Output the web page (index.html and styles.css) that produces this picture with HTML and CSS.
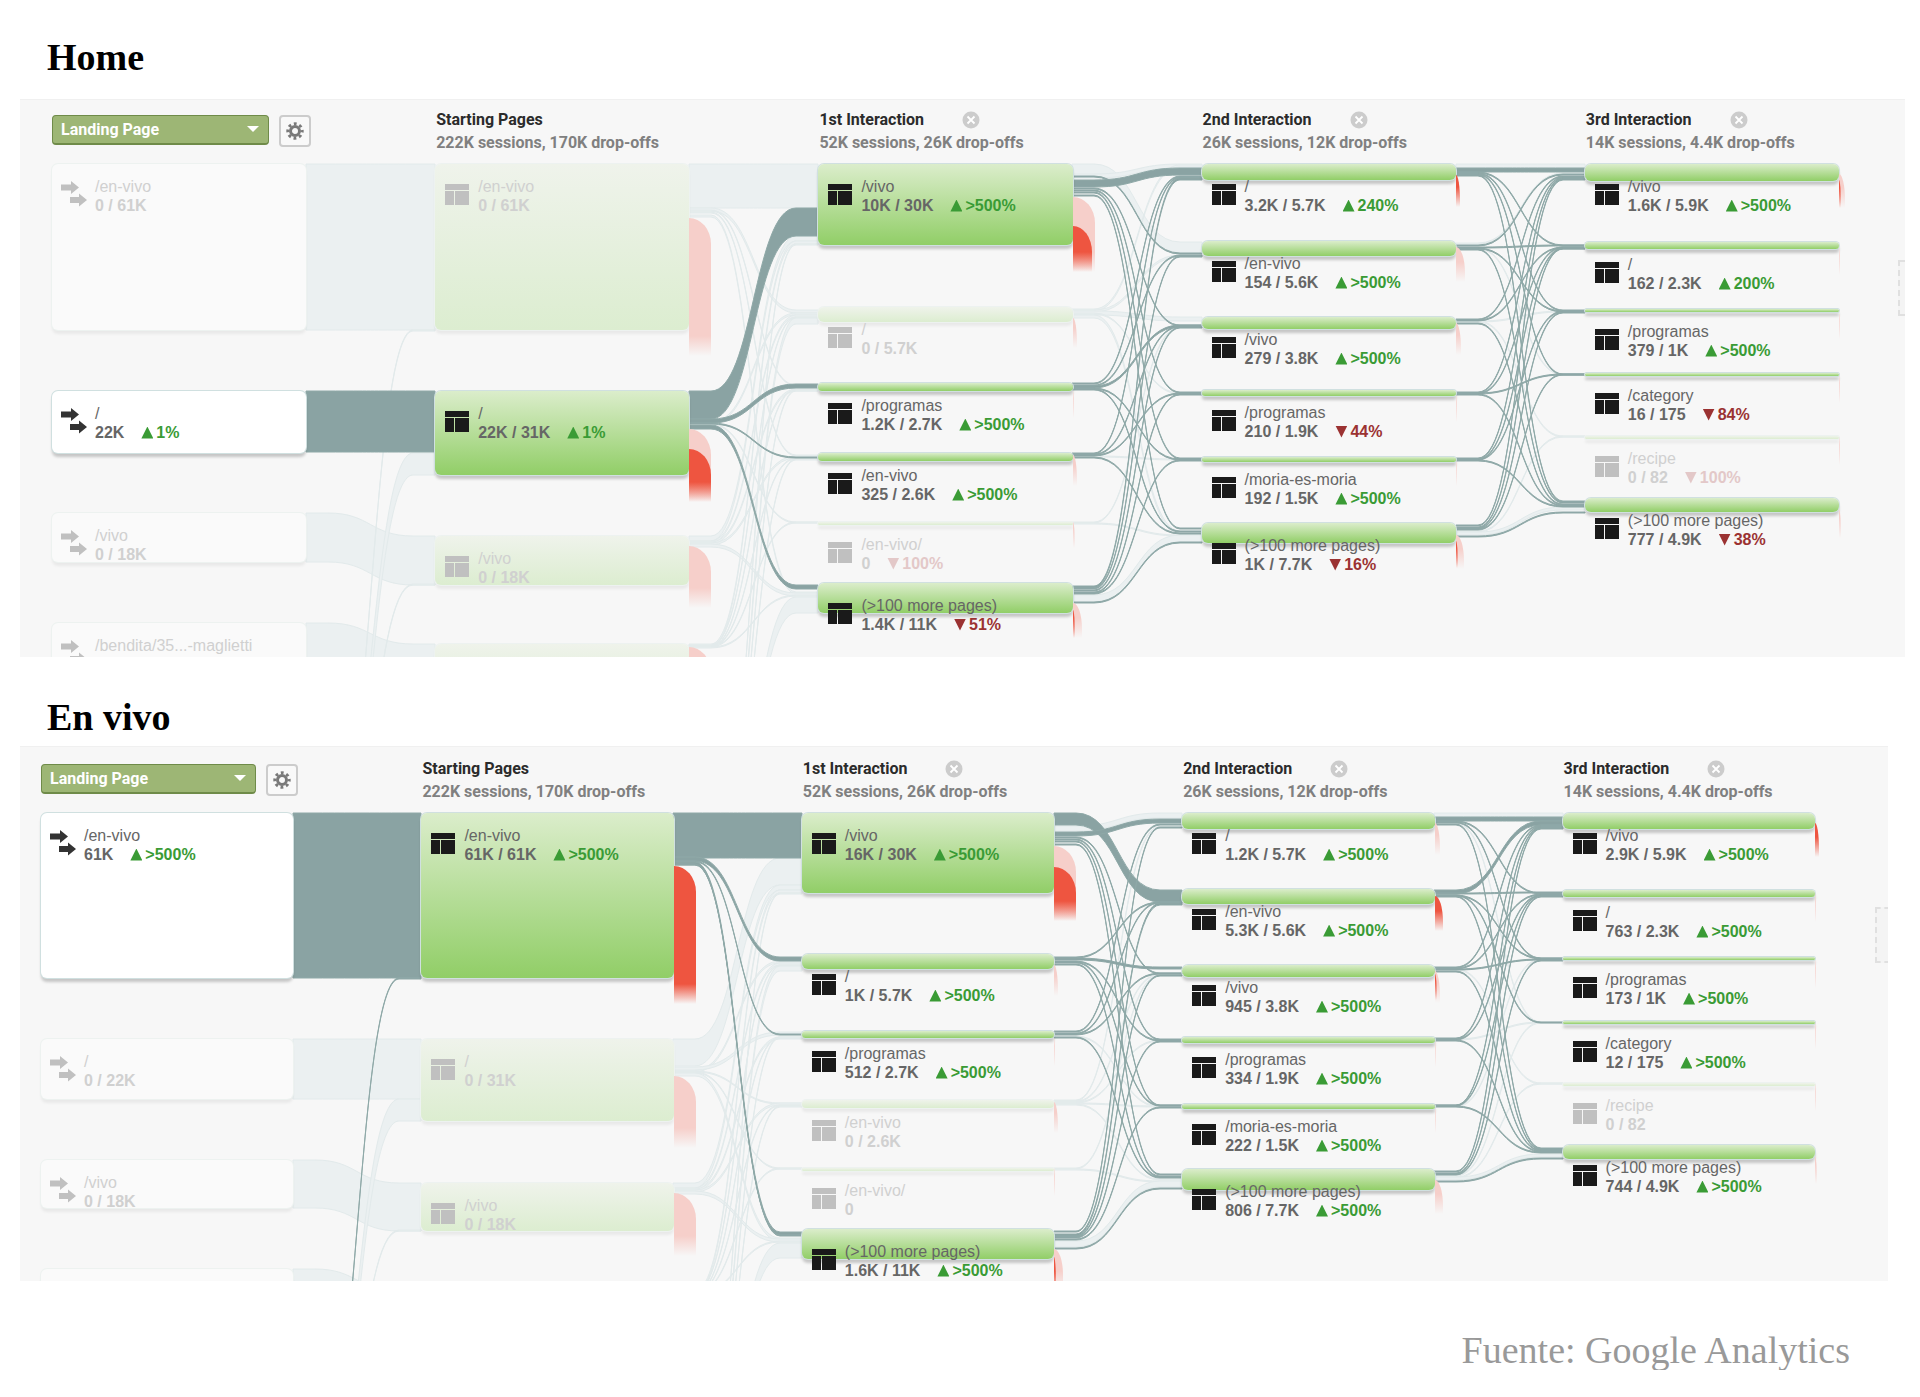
FILE: index.html
```html
<!DOCTYPE html>
<html lang="es">
<head>
  <meta charset="UTF-8">
  <meta name="viewport" content="width=device-width, initial-scale=1">
  <title>Flujo de usuarios - Home y En vivo</title>
  <link rel="stylesheet" href="styles.css">
</head>
<body>

<!-- icons -->
<svg class="sprite" aria-hidden="true">
  <symbol id="icon-page" viewBox="0 0 24 21">
    <path d="M0 0h24v6H0zM0 7h9v14H0zM10 7h14v14H10z"/>
  </symbol>
  <symbol id="icon-landing" viewBox="0 0 26 26">
    <path d="M0 3.500h10V0l8 6.500-8 6.500V9.500H0zM9 16h9v-3.500l8 6.500-8 6.500V22H9z"/>
  </symbol>
  <symbol id="icon-close" viewBox="0 0 18 18">
    <circle cx="9" cy="9" r="8.500" fill="#cccccc"/>
    <path d="M5.500 5.500l7 7M12.500 5.500l-7 7" stroke="#fff" stroke-width="1.800"/>
  </symbol>
  <symbol id="icon-gear" viewBox="0 0 18 18">
    <circle cx="9" cy="9" r="4.500" fill="none" stroke="#7a7a7a" stroke-width="3"/>
    <circle cx="9" cy="9" r="7.200" fill="none" stroke="#7a7a7a" stroke-width="3" stroke-dasharray="2.800 2.855" stroke-dashoffset="1.400"/>
  </symbol>
</svg>

<section>
  <h2 class="title title-home">Home</h2>
  <div class="panel panel-home">
    <div class="columns heads">
      <div class="tools">
        <div class="dropdown">
          <select aria-label="Dimension"><option>Landing Page</option></select>
        </div>
        <button class="gear" aria-label="Settings"><svg><use href="#icon-gear"/></svg></button>
      </div>
      <div class="head">
        <div class="step">Starting Pages</div>
        <div class="sessions">222K sessions, 170K drop-offs</div>
      </div>
      <div class="head">
        <div class="step">1st Interaction <button class="close" aria-label="Remove step"><svg><use href="#icon-close"/></svg></button></div>
        <div class="sessions">52K sessions, 26K drop-offs</div>
      </div>
      <div class="head">
        <div class="step">2nd Interaction <button class="close" aria-label="Remove step"><svg><use href="#icon-close"/></svg></button></div>
        <div class="sessions">26K sessions, 12K drop-offs</div>
      </div>
      <div class="head">
        <div class="step">3rd Interaction <button class="close" aria-label="Remove step"><svg><use href="#icon-close"/></svg></button></div>
        <div class="sessions">14K sessions, 4.4K drop-offs</div>
      </div>
    </div>
    <div class="columns stage" id="flow-home"></div>
    <div class="next-step"></div>
  </div>
</section>

<section>
  <h2 class="title title-vivo">En vivo</h2>
  <div class="panel panel-vivo">
    <div class="columns heads">
      <div class="tools">
        <div class="dropdown">
          <select aria-label="Dimension"><option>Landing Page</option></select>
        </div>
        <button class="gear" aria-label="Settings"><svg><use href="#icon-gear"/></svg></button>
      </div>
      <div class="head">
        <div class="step">Starting Pages</div>
        <div class="sessions">222K sessions, 170K drop-offs</div>
      </div>
      <div class="head">
        <div class="step">1st Interaction <button class="close" aria-label="Remove step"><svg><use href="#icon-close"/></svg></button></div>
        <div class="sessions">52K sessions, 26K drop-offs</div>
      </div>
      <div class="head">
        <div class="step">2nd Interaction <button class="close" aria-label="Remove step"><svg><use href="#icon-close"/></svg></button></div>
        <div class="sessions">26K sessions, 12K drop-offs</div>
      </div>
      <div class="head">
        <div class="step">3rd Interaction <button class="close" aria-label="Remove step"><svg><use href="#icon-close"/></svg></button></div>
        <div class="sessions">14K sessions, 4.4K drop-offs</div>
      </div>
    </div>
    <div class="columns stage" id="flow-vivo"></div>
    <div class="next-step"></div>
  </div>
</section>

<footer class="source">Fuente: Google Analytics</footer>

<script src="flow.js"></script>
</body>
</html>
```

FILE: styles.css
```css
* {
  box-sizing: border-box;
}

body {
  margin: 0;
  background: #fff;
  font-family: "Liberation Sans", Arial, sans-serif;
  font-size: 16px;
}

button {
  padding: 0;
  border: none;
  background: none;
  cursor: pointer;
}

.sprite {
  display: none;
}

.title {
  margin: 0;
  padding-left: 47px;
  font-family: "Liberation Serif", serif;
  font-size: 38px;
  line-height: 40px;
  font-weight: bold;
  color: #000;
}

.title-home {
  padding-top: 37px;
  padding-bottom: 22px;
}

.title-vivo {
  padding-top: 40px;
  padding-bottom: 9px;
}

.panel {
  position: relative;
  background: #f7f7f7;
  border-top: 1px solid #f0f0f0;
  overflow: hidden;
}

.panel-home {
  margin: 0 15px 0 20px;
}

.panel-vivo {
  margin: 0 32px 0 20px;
}

/* five equal columns, shared by the heads and the flow below */
.columns {
  display: grid;
  grid-template-columns: repeat(5, minmax(0, 1fr));
}

.panel-home .columns {
  padding-left: 32px;
  padding-right: 66px;
  column-gap: 129px;
}

.panel-vivo .columns {
  padding-left: 21px;
  padding-right: 73px;
  column-gap: 128px;
}

.panel-home .heads {
  height: 62px;
  padding-top: 8px;
}

.panel-vivo .heads {
  height: 63px;
  padding-top: 10px;
}

.head {
  padding-left: 1px;
  font-family: Roboto, sans-serif;
  font-weight: bold;
  line-height: 23px;
  white-space: nowrap;
}

.step {
  display: flex;
  align-items: center;
  gap: 38px;
  color: #2b2b2b;
}

.sessions {
  color: #808080;
}

.close,
.close svg {
  display: block;
  width: 18px;
  height: 18px;
}

.tools {
  display: flex;
  gap: 10px;
  padding-top: 7px;
}

.dropdown {
  position: relative;
  flex: none;
  width: 217px;
  height: 30px;
}

.panel-vivo .dropdown {
  width: 215px;
}

.dropdown select {
  appearance: none;
  width: 100%;
  height: 100%;
  padding: 0 8px;
  border: 1px solid #6f8b49;
  border-bottom-width: 2px;
  border-radius: 4px;
  background: #9db675;
  color: #fff;
  font-family: Roboto, sans-serif;
  font-size: 16px;
  font-weight: bold;
}

.dropdown::after {
  content: "";
  position: absolute;
  top: 11px;
  right: 10px;
  border: 6px solid transparent;
  border-top-color: #fff;
  border-bottom: none;
}

.gear {
  display: flex;
  flex: none;
  align-items: center;
  justify-content: center;
  width: 32px;
  height: 32px;
  border: 2px solid #ccc;
  border-radius: 4px;
  background: #f9f9f9;
}

.gear svg {
  width: 18px;
  height: 18px;
}

/* flow diagram */
.stage {
  position: relative;
  overflow: hidden;
}

#flow-home {
  height: 495px;
}

#flow-vivo {
  height: 471px;
}

.links {
  position: absolute;
  top: 0;
  left: 0;
  width: 100%;
  height: 100%;
}

.link {
  fill: #ebf0f1;
  stroke: #e2eaeb;
}

.link.on {
  fill: #8aa3a3;
  stroke: #8fa9a8;
}

.column {
  position: relative;
}

.node {
  position: absolute;
  left: 0;
  right: 0;
}

.bar {
  position: absolute;
  top: 0;
  left: 0;
  right: 0;
  border-radius: 6px;
  background: linear-gradient(#eff3eb, #dcedd0);
  box-shadow: 0 0 0 1px #edf2f0, 0 4px 3px rgba(0, 0, 0, 0.06);
}

.node.on .bar {
  background: linear-gradient(#dbedcb, #91ce67);
  box-shadow: 0 0 0 1px #d0e0e0, 0 4px 3px rgba(0, 0, 0, 0.2);
}

.node.landing .bar {
  background: #fafafa;
}

.node.landing.on .bar {
  background: #fff;
}

.caption {
  position: relative;
  display: flex;
  gap: 8px;
  padding: 13px 0 0 9px;
  line-height: 19px;
  color: #d0d0d0;
  white-space: nowrap;
}

.icon {
  width: 26px;
  height: 21px;
  margin-top: 7px;
  fill: #c0c0c0;
}

.landing .icon {
  height: 26px;
  margin-top: 4px;
}

.on .caption {
  color: #666;
}

.on .icon {
  fill: #1a1a1a;
}

.on.landing .icon {
  fill: #333;
}

.numbers {
  display: flex;
  align-items: center;
  font-weight: bold;
}

.change {
  display: flex;
  align-items: center;
  gap: 3px;
  margin-left: 17px;
}

.change::before {
  content: "";
  width: 12px;
  height: 12px;
  background: currentColor;
}

.up {
  color: #3a9b35;
}

.up::before {
  clip-path: polygon(50% 0, 100% 100%, 0 100%);
}

.down {
  color: #e3c8c8;
}

.on .down {
  color: #9b3232;
}

.down::before {
  clip-path: polygon(0 0, 100% 0, 50% 100%);
}

/* drop-offs */
.drop {
  position: absolute;
  left: 100%;
  border-radius: 0 100% 0 0 / 0 26px 0 0;
  background: linear-gradient(#f6cfca calc(100% - 20px), transparent);
}

.drop.red {
  background: linear-gradient(#ee5540 calc(100% - 20px), transparent);
}

.next-step {
  position: absolute;
  top: 160px;
  right: -2px;
  height: 56px;
  border: 2px dashed #e0e0e0;
  background: #f4f4f4;
}

.panel-home .next-step {
  width: 9px;
}

.panel-vivo .next-step {
  width: 15px;
}

.source {
  padding: 49px 70px 0 0;
  font-family: "Liberation Serif", serif;
  font-size: 38px;
  line-height: 40px;
  text-align: right;
  color: #999;
}
```

FILE: flow.js
```javascript
// node: [top, height, label, numbers, change, active, drop-offs]
// drop-off: [offset, height, width, active]
const home = {
  columns: [
    [
      [2, 166, '/en-vivo', '0 / 61K', '', 0, []],
      [229, 62, '/', '22K', '+1%', 1, []],
      [351, 49, '/vivo', '0 / 18K', '', 0, []],
      [461, 60, '/bendita/35...-maglietti', '', '', 0, []],
      [700, 60, '', '', '', 0, []]
    ],
    [
      [2, 166, '/en-vivo', '0 / 61K', '', 0, [[54, 138, 22, 0]]],
      [229, 84, '/', '22K / 31K', '+1%', 1, [[38, 73, 22, 0], [58, 53, 22, 1]]],
      [374, 49, '/vivo', '0 / 18K', '', 0, [[10, 62, 22, 0]]],
      [482, 60, '', '', '', 0, [[3, 62, 22, 0]]],
      [700, 60, '', '', '', 0, []]
    ],
    [
      [2, 81, '/vivo', '10K / 30K', '+>500%', 1, [[33, 75, 22, 0], [62, 46, 19, 1]]],
      [145, 15, '/', '0 / 5.7K', '', 0, [[11, 30, 4, 0]]],
      [221, 8, '/programas', '1.2K / 2.7K', '+>500%', 1, [[8, 27, 1, 0]]],
      [291, 8, '/en-vivo', '325 / 2.6K', '+>500%', 1, [[2, 31, 4, 0]]],
      [360, 3, '/en-vivo/', '0', '-100%', 0, [[0, 26, 2, 0]]],
      [421, 30, '(>100 more pages)', '1.4K / 11K', '-51%', 1, [[20, 35, 9, 0], [27, 28, 2, 1]]]
    ],
    [
      [2, 16, '/', '3.2K / 5.7K', '+240%', 1, [[11, 32, 4, 1]]],
      [79, 15, '/en-vivo', '154 / 5.6K', '+>500%', 1, [[6, 35, 9, 0]]],
      [155, 12, '/vivo', '279 / 3.8K', '+>500%', 1, [[6, 32, 5, 0]]],
      [228, 6, '/programas', '210 / 1.9K', '-44%', 1, [[5, 27, 1, 0]]],
      [295, 5, '/moria-es-moria', '192 / 1.5K', '+>500%', 1, [[4, 25, 1, 0]]],
      [361, 20, '(>100 more pages)', '1K / 7.7K', '-16%', 1, [[12, 34, 8, 0], [18, 27, 2, 1]]]
    ],
    [
      [2, 17, '/vivo', '1.6K / 5.9K', '+>500%', 1, [[10, 34, 6, 0], [16, 28, 2, 1]]],
      [80, 7, '/', '162 / 2.3K', '+200%', 1, [[6, 27, 1, 0]]],
      [147, 3, '/programas', '379 / 1K', '+>500%', 1, [[4, 26, 1, 0]]],
      [211, 3, '/category', '16 / 175', '-84%', 1, [[2, 28, 1, 0]]],
      [274, 3, '/recipe', '0 / 82', '-100%', 0, [[1, 28, 1, 0]]],
      [336, 14, '(>100 more pages)', '777 / 4.9K', '-38%', 1, [[11, 29, 2, 0]]]
    ]
  ],
  // link: [from row, to row, from offset, to offset, thickness, active]
  links: [
    [
      [0, 0, 0, 0, 166, 0], [1, 1, 0, 0, 61, 1], [2, 2, 0, 0, 49, 0], [3, 3, 0, 0, 60, 0],
      [4, 0, 0, 166, 1, 0], [4, 1, 8, 62, 22, 0], [4, 2, 60, 48, 1, 0]
    ],
    [
      [0, 0, 0, 0, 44, 0], [0, 1, 44, 3, 3, 0], [0, 2, 46, 2, 1, 0], [0, 3, 48, 2, 1, 0], [0, 5, 51, 9, 2, 0],
      [1, 0, 0, 44, 28, 1], [1, 2, 28, 1, 4, 1], [1, 3, 32, 4, 1, 1], [1, 5, 34, 2, 4, 1],
      [1, 1, 31, 6, 2, 0], [1, 4, 33, 0, 1, 0],
      [2, 0, 0, 72, 5, 0], [2, 1, 5, 8, 2, 0], [2, 2, 6, 6, 2, 0], [2, 3, 7, 3, 2, 0], [2, 5, 8, 10, 3, 0],
      [3, 0, 0, 77, 3, 0], [3, 1, 1, 10, 1, 0], [3, 2, 2, 6, 1, 0], [3, 3, 2, 5, 1, 0], [3, 4, 2, 0, 1, 0], [3, 5, 3, 12, 1, 0],
      [4, 0, 0, 80, 1, 0], [4, 1, 2, 11, 6, 0], [4, 2, 8, 7, 1, 0], [4, 3, 9, 6, 1, 0], [4, 5, 10, 14, 16, 0]
    ],
    [
      [0, 1, 0, 1, 11, 0], [0, 0, 10, 0, 4, 0], [0, 1, 12, 12, 1, 1], [0, 0, 16, 4, 7, 1],
      [0, 2, 24, 8, 1, 1], [0, 3, 26, 2, 1, 1], [0, 4, 28, 1, 1, 1], [0, 5, 31, 5, 1, 1],
      [1, 0, 2, 1, 2, 0], [1, 1, 3, 14, 2, 0], [1, 2, 4, 0, 4, 0], [1, 3, 6, 3, 1, 0], [1, 5, 8, 8, 3, 0],
      [2, 0, 0, 12, 1, 1], [2, 1, 2, 14, 1, 1], [2, 2, 3, 8, 2, 1], [2, 4, 5, 2, 1, 1], [2, 5, 6, 8, 1, 1],
      [3, 0, 0, 13, 1, 1], [3, 2, 1, 9, 1, 1], [3, 3, 2, 3, 1, 1], [3, 4, 3, 2, 1, 0], [3, 5, 4, 10, 1, 1],
      [4, 2, 0, 10, 1, 0], [4, 5, 1, 12, 1, 0],
      [5, 0, 3, 14, 2, 1], [5, 1, 5, 15, 1, 1], [5, 2, 7, 10, 1, 1], [5, 3, 9, 4, 1, 1], [5, 4, 10, 3, 1, 1],
      [5, 5, 12, 12, 7, 0], [5, 5, 19, 19, 1, 1]
    ],
    [
      [0, 0, 0, 0, 4, 0], [0, 0, 4, 4, 4, 1], [0, 1, 8, 3, 1, 1], [0, 2, 9, 1, 1, 1], [0, 3, 10, 1, 1, 1], [0, 5, 11, 3, 1, 1],
      [1, 0, 2, 9, 1, 0], [1, 0, 4, 10, 1, 1], [1, 1, 6, 3, 1, 1], [1, 2, 7, 2, 1, 1], [1, 3, 7, 1, 1, 0], [1, 5, 8, 4, 1, 1],
      [2, 0, 2, 12, 1, 1], [2, 1, 3, 5, 1, 1], [2, 2, 4, 2, 1, 0], [2, 4, 4, 0, 1, 0], [2, 5, 6, 6, 1, 1],
      [3, 0, 2, 13, 1, 1], [3, 1, 3, 5, 1, 1], [3, 3, 3, 1, 1, 1], [3, 5, 4, 7, 1, 1],
      [4, 0, 1, 14, 1, 1], [4, 1, 2, 6, 1, 1], [4, 2, 2, 2, 1, 1], [4, 5, 3, 8, 1, 1],
      [5, 0, 2, 15, 1, 1], [5, 1, 4, 6, 1, 1], [5, 2, 5, 3, 1, 1], [5, 3, 6, 1, 1, 1], [5, 4, 8, 0, 1, 0],
      [5, 5, 9, 9, 3, 0], [5, 5, 13, 14, 1, 1]
    ]
  ]
};

const vivo = {
  columns: [
    [
      [3, 165, '/en-vivo', '61K', '+>500%', 1, []],
      [229, 60, '/', '0 / 22K', '', 0, []],
      [350, 48, '/vivo', '0 / 18K', '', 0, []],
      [459, 60, '', '', '', 0, []],
      [670, 60, '', '', '', 0, []]
    ],
    [
      [3, 165, '/en-vivo', '61K / 61K', '+>500%', 1, [[53, 138, 22, 1]]],
      [229, 82, '/', '0 / 31K', '', 0, [[37, 72, 22, 0]]],
      [373, 48, '/vivo', '0 / 18K', '', 0, [[10, 63, 22, 0]]],
      [481, 60, '', '', '', 0, []],
      [670, 60, '', '', '', 0, []]
    ],
    [
      [3, 80, '/vivo', '16K / 30K', '+>500%', 1, [[33, 75, 22, 0], [54, 54, 22, 1]]],
      [144, 15, '/', '1K / 5.7K', '+>500%', 1, [[11, 31, 4, 0]]],
      [221, 7, '/programas', '512 / 2.7K', '+>500%', 1, [[7, 28, 1, 0]]],
      [290, 8, '/en-vivo', '0 / 2.6K', '', 0, [[2, 31, 4, 0]]],
      [358, 3, '/en-vivo/', '0', '', 0, [[0, 28, 1, 0]]],
      [419, 30, '(>100 more pages)', '1.6K / 11K', '+>500%', 1, [[20, 42, 9, 0], [28, 34, 2, 1]]]
    ],
    [
      [3, 16, '/', '1.2K / 5.7K', '+>500%', 1, [[10, 32, 5, 0]]],
      [79, 15, '/en-vivo', '5.3K / 5.6K', '+>500%', 1, [[7, 35, 8, 1]]],
      [155, 12, '/vivo', '945 / 3.8K', '+>500%', 1, [[6, 32, 5, 0], [9, 26, 2, 1]]],
      [227, 6, '/programas', '334 / 1.9K', '+>500%', 1, [[4, 26, 1, 0]]],
      [294, 5, '/moria-es-moria', '222 / 1.5K', '+>500%', 1, [[4, 25, 1, 0]]],
      [359, 21, '(>100 more pages)', '806 / 7.7K', '+>500%', 1, [[11, 34, 8, 0]]]
    ],
    [
      [3, 16, '/vivo', '2.9K / 5.9K', '+>500%', 1, [[10, 34, 4, 1]]],
      [80, 7, '/', '763 / 2.3K', '+>500%', 1, [[3, 29, 1, 0]]],
      [147, 3, '/programas', '173 / 1K', '+>500%', 1, [[3, 28, 1, 0]]],
      [211, 3, '/category', '12 / 175', '+>500%', 1, [[1, 27, 1, 0]]],
      [273, 3, '/recipe', '0 / 82', '', 0, [[1, 27, 1, 0]]],
      [335, 14, '(>100 more pages)', '744 / 4.9K', '+>500%', 1, [[11, 28, 2, 0]]]
    ]
  ],
  links: [
    [
      [0, 0, 0, 0, 165, 1], [1, 1, 0, 0, 60, 0], [2, 2, 0, 0, 48, 0], [3, 3, 0, 0, 60, 0],
      [4, 0, 0, 165, 1, 1], [4, 1, 8, 60, 22, 0], [4, 2, 60, 47, 1, 0]
    ],
    [
      [0, 0, 0, 0, 45, 1], [0, 1, 44, 3, 4, 1], [0, 2, 48, 3, 1, 1], [0, 5, 49, 3, 3, 1], [0, 5, 51, 6, 1, 1],
      [1, 0, 0, 45, 27, 0], [1, 1, 31, 7, 2, 0], [1, 2, 28, 1, 3, 0], [1, 3, 32, 3, 1, 0], [1, 4, 33, 0, 1, 0], [1, 5, 34, 9, 3, 0],
      [2, 0, 0, 72, 5, 0], [2, 1, 5, 9, 2, 0], [2, 2, 6, 6, 2, 0], [2, 3, 7, 3, 2, 0], [2, 5, 8, 10, 3, 0],
      [3, 0, 0, 77, 3, 0], [3, 1, 1, 11, 1, 0], [3, 2, 2, 6, 1, 0], [3, 3, 2, 5, 1, 0], [3, 4, 2, 0, 1, 0], [3, 5, 3, 12, 1, 0],
      [4, 0, 0, 80, 1, 0], [4, 1, 2, 12, 5, 0], [4, 2, 8, 6, 1, 0], [4, 3, 9, 6, 1, 0], [4, 5, 10, 14, 15, 0]
    ],
    [
      [0, 1, 0, 1, 12, 1], [0, 0, 13, 0, 5, 0], [0, 0, 19, 6, 4, 1],
      [0, 2, 24, 8, 1, 1], [0, 3, 26, 2, 1, 1], [0, 4, 28, 1, 1, 1], [0, 5, 31, 5, 1, 1],
      [1, 1, 3, 13, 1, 1], [1, 2, 4, 2, 2, 1], [1, 3, 7, 3, 1, 1], [1, 4, 8, 1, 1, 1], [1, 5, 10, 7, 1, 1],
      [2, 0, 0, 11, 1, 1], [2, 1, 2, 13, 1, 1], [2, 2, 3, 8, 1, 1], [2, 4, 5, 2, 1, 0], [2, 5, 6, 8, 1, 1],
      [3, 0, 0, 13, 1, 0], [3, 2, 1, 9, 1, 0], [3, 3, 2, 3, 1, 0], [3, 4, 3, 2, 1, 0], [3, 5, 4, 10, 1, 0],
      [4, 2, 0, 10, 1, 0], [4, 5, 1, 12, 1, 0],
      [5, 0, 2, 14, 1, 1], [5, 1, 5, 14, 2, 1], [5, 2, 7, 10, 1, 1], [5, 3, 8, 4, 1, 1], [5, 4, 10, 3, 1, 1],
      [5, 5, 12, 12, 6, 0], [5, 5, 19, 19, 1, 1]
    ],
    [
      [0, 0, 0, 0, 4, 0], [0, 0, 4, 4, 4, 1], [0, 1, 8, 3, 1, 1], [0, 2, 9, 1, 1, 1], [0, 3, 10, 1, 1, 0], [0, 5, 11, 3, 1, 1],
      [1, 0, 1, 8, 4, 1], [1, 1, 4, 2, 1, 1], [1, 2, 6, 1, 1, 1], [1, 3, 6, 1, 1, 1], [1, 5, 7, 4, 1, 1],
      [2, 0, 2, 12, 1, 1], [2, 1, 3, 4, 1, 1], [2, 2, 4, 2, 1, 1], [2, 4, 4, 0, 1, 0], [2, 5, 6, 5, 1, 1],
      [3, 0, 1, 13, 1, 1], [3, 1, 2, 5, 1, 1], [3, 3, 2, 1, 1, 0], [3, 5, 3, 6, 1, 1],
      [4, 0, 1, 14, 1, 1], [4, 1, 1, 5, 1, 1], [4, 2, 2, 2, 1, 0], [4, 5, 2, 7, 1, 1],
      [5, 0, 2, 15, 1, 1], [5, 1, 4, 6, 1, 1], [5, 2, 5, 3, 1, 1], [5, 3, 6, 1, 1, 0], [5, 4, 8, 0, 1, 0],
      [5, 5, 8, 9, 3, 0], [5, 5, 12, 13, 1, 1]
    ]
  ]
};

function nodeHtml(node, isLanding) {
  const [top, height, label, numbers, change, on, drops] = node;
  let html = `<div class="node${on ? ' on' : ''}${isLanding ? ' landing' : ''}" style="top:${top}px">`;
  html += `<div class="bar" style="height:${height}px"></div>`;
  drops.forEach(d => {
    html += `<div class="drop${d[3] ? ' red' : ''}" style="top:${d[0]}px;height:${d[1]}px;width:${d[2]}px"></div>`;
  });
  if (label) {
    html += `<div class="caption"><svg class="icon"><use href="#icon-${isLanding ? 'landing' : 'page'}"/></svg><div>`;
    html += `<div>${label.replace('>', '&gt;')}</div><div class="numbers">${numbers}`;
    if (change) {
      html += `<span class="change ${change[0] === '+' ? 'up' : 'down'}">${change.slice(1).replace('>', '&gt;')}</span>`;
    }
    html += '</div></div></div>';
  }
  return html + '</div>';
}

// ribbon between two nodes, straight at both ends
function ribbon(x0, y0, x1, y1, h) {
  const a = x0 + 22;
  const b = x1 - 22;
  const m = (a + b) / 2;
  return `M${x0} ${y0}H${a}C${m} ${y0} ${m} ${y1} ${b} ${y1}H${x1}V${y1 + h}H${b}` +
    `C${m} ${y1 + h} ${m} ${y0 + h} ${a} ${y0 + h}H${x0}Z`;
}

function drawLinks(stage, flow) {
  const cols = stage.querySelectorAll('.column');
  const paths = ['', ''];
  flow.links.forEach((list, i) => {
    const x0 = cols[i].offsetLeft + cols[i].offsetWidth;
    const x1 = cols[i + 1].offsetLeft;
    list.forEach(([from, to, outY, inY, h, on]) => {
      const y0 = flow.columns[i][from][0] + outY;
      const y1 = flow.columns[i + 1][to][0] + inY;
      paths[on] += `<path class="link${on ? ' on' : ''}" d="${ribbon(x0, y0, x1, y1, h)}"/>`;
    });
  });
  stage.querySelector('.links').innerHTML = paths[0] + paths[1];
}

function drawFlow(id, flow) {
  const stage = document.getElementById(id);
  let html = '<svg class="links"></svg>';
  flow.columns.forEach((nodes, i) => {
    html += `<div class="column">${nodes.map(n => nodeHtml(n, i === 0)).join('')}</div>`;
  });
  stage.innerHTML = html;
  drawLinks(stage, flow);
  window.addEventListener('resize', () => drawLinks(stage, flow));
}

drawFlow('flow-home', home);
drawFlow('flow-vivo', vivo);
```
